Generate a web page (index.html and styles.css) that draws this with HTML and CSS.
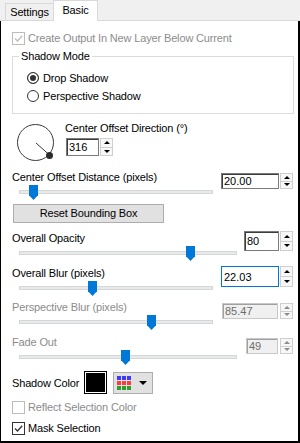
FILE: index.html
```html
<!DOCTYPE html>
<html lang="en">
<head>
<meta charset="UTF-8" />
<meta name="viewport" content="width=device-width, initial-scale=1" />
<title>Drop Shadow</title>
<link rel="stylesheet" href="styles.css">
</head>
<body>
  <div class="tabs">
    <div class="tab">Settings</div>
    <div class="tab active">Basic</div>
  </div>

  <div class="page">
    <div class="check disabled">
      <span class="box"><svg viewBox="0 0 11 11"><path d="M2 5.5 L4.5 8 L9.2 2.8" /></svg></span>
      Create Output In New Layer Below Current
    </div>

    <div class="group">
      <span class="legend">Shadow Mode</span>
      <div class="radio first"><span class="dot on"></span>Drop Shadow</div>
      <div class="radio"><span class="dot"></span>Perspective Shadow</div>
    </div>

    <div class="direction">
      <svg class="dial" width="40" height="40" viewBox="0 0 40 40">
        <circle cx="20.5" cy="20.5" r="18" fill="none" stroke="#3a3a3a" />
        <line x1="21" y1="21" x2="34.5" y2="33" stroke="#3a3a3a" />
        <circle cx="34.5" cy="33.5" r="3.5" fill="#2b2b2b" />
      </svg>
      <div class="dir-fields">
        <div class="label">Center Offset Direction (°)</div>
        <div class="spin dir">
          <span class="num" style="width:33px">316</span>
          <span class="arrows"><i class="up"></i><i class="down"></i></span>
        </div>
      </div>
    </div>

    <div class="row gap-lg">
      <div class="slider-col">
        <div class="label">Center Offset Distance (pixels)</div>
        <div class="slider"><div class="track"></div><span class="thumb" style="left:10px"></span></div>
      </div>
      <div class="spin">
        <span class="num" style="width:58px">20.00</span>
        <span class="arrows"><i class="up"></i><i class="down"></i></span>
      </div>
    </div>

    <div class="btn">Reset Bounding Box</div>

    <div class="row gap-lg">
      <div class="slider-col">
        <div class="label">Overall Opacity</div>
        <div class="slider long"><div class="track"></div><span class="thumb" style="left:167px"></span></div>
      </div>
      <div class="spin tall">
        <span class="num" style="width:35px">80</span>
        <span class="arrows"><i class="up"></i><i class="down"></i></span>
      </div>
    </div>

    <div class="row">
      <div class="slider-col">
        <div class="label">Overall Blur (pixels)</div>
        <div class="slider"><div class="track"></div><span class="thumb" style="left:69px"></span></div>
      </div>
      <div class="spin tall focus">
        <span class="num" style="width:58px">22.03</span>
        <span class="arrows"><i class="up"></i><i class="down"></i></span>
      </div>
    </div>

    <div class="row gap-sm disabled">
      <div class="slider-col">
        <div class="label">Perspective Blur (pixels)</div>
        <div class="slider"><div class="track"></div><span class="thumb" style="left:128px"></span></div>
      </div>
      <div class="spin off">
        <span class="num" style="width:56px">85.47</span>
        <span class="arrows"><i class="up"></i><i class="down"></i></span>
      </div>
    </div>

    <div class="row disabled">
      <div class="slider-col">
        <div class="label">Fade Out</div>
        <div class="slider long"><div class="track"></div><span class="thumb" style="left:102px"></span></div>
      </div>
      <div class="spin off">
        <span class="num" style="width:32px">49</span>
        <span class="arrows"><i class="up"></i><i class="down"></i></span>
      </div>
    </div>

    <div class="color-row">
      <span class="color-label">Shadow Color</span>
      <span class="swatch"></span>
      <span class="palette">
        <span class="grid">
          <i class="b"></i><i class="b"></i><i class="b"></i>
          <i class="r"></i><i class="r"></i><i class="r"></i>
          <i class="g"></i><i class="g"></i><i class="g"></i>
        </span>
        <span class="caret"></span>
      </span>
    </div>

    <div class="check disabled reflect">
      <span class="box"></span>
      Reflect Selection Color
    </div>

    <div class="check mask">
      <span class="box"><svg viewBox="0 0 11 11"><path d="M2 5.5 L4.5 8 L9.2 2.8" /></svg></span>
      Mask Selection
    </div>
  </div>
</body>
</html>
```

FILE: styles.css
```css
* {
  box-sizing: border-box;
}

html, body {
  margin: 0;
  padding: 0;
}

body {
  width: 300px;
  height: 443px;
  overflow: hidden;
  background: #fff;
  color: #000;
  font-family: "Liberation Sans", Arial, sans-serif;
  font-size: 11px;
  letter-spacing: -0.15px;
}

/* tab strip */
.tabs {
  display: flex;
  align-items: flex-end;
  height: 21px;
  padding-left: 5px;
  background: #f0f0f0;
  border-bottom: 1px solid #d9d9d9;
}

.tab {
  width: 49px;
  height: 17px;
  line-height: 16px;
  text-align: center;
  border: 1px solid #d9d9d9;
  border-bottom: none;
  background: #f0f0f0;
}

.tab.active {
  width: 45px;
  height: 21px;
  line-height: 19px;
  margin-left: -1px;
  margin-bottom: -1px;
  background: #fff;
}

/* tab page */
.page {
  height: 422px;
  padding: 11px 4px 0 11px;
  border-left: 1px solid #000;
  border-right: 2px solid #000;
  border-bottom: 2px solid #000;
}

.label {
  line-height: 13px;
  white-space: nowrap;
}

.disabled,
.disabled .label {
  color: #8c8c8c;
}

/* check boxes */
.check {
  display: flex;
  align-items: center;
  gap: 3px;
  height: 13px;
  line-height: 13px;
  white-space: nowrap;
}

.box {
  width: 13px;
  height: 13px;
  border: 1px solid #333;
  background: #fff;
  flex: none;
}

.box svg {
  display: block;
  width: 11px;
  height: 11px;
  fill: none;
  stroke: #333;
  stroke-width: 1.3;
}

.check.disabled .box {
  border-color: #bcbcbc;
}

.check.disabled .box svg {
  stroke: #bcbcbc;
}

.check.reflect {
  margin-top: 7px;
}

.check.mask {
  margin-top: 8px;
}

/* group box */
.group {
  margin-top: 11px;
  height: 58px;
  border: 1px solid #dcdcdc;
}

.legend {
  display: block;
  width: fit-content;
  margin: -7px 0 0 6px;
  padding: 0 2px;
  line-height: 13px;
  background: #fff;
}

.radio {
  display: flex;
  align-items: center;
  gap: 4px;
  height: 13px;
  margin: 5px 0 0 14px;
}

.radio.first {
  margin-top: 8px;
}

.dot {
  width: 12px;
  height: 12px;
  border: 1px solid #333;
  border-radius: 50%;
  background: #fff;
}

.dot.on {
  background: #333;
  box-shadow: inset 0 0 0 2px #fff;
}

/* direction dial */
.direction {
  display: flex;
  margin-top: 8px;
}

.dial {
  display: block;
  margin-left: 3px;
}

.dir-fields {
  margin-left: 10px;
}

/* number inputs with up/down buttons */
.spin {
  display: flex;
  gap: 1px;
  height: 16px;
  margin-top: 2px;
  margin-right: 1px;
}

.spin.dir {
  height: 18px;
  margin: 3px 0 0 1px;
}

.spin.tall {
  height: 20px;
  margin-top: -1px;
}

.spin.focus {
  height: 21px;
}

.spin.off {
  gap: 2px;
}

.num {
  display: flex;
  align-items: center;
  padding-left: 2px;
  letter-spacing: 0;
  background: #fff;
  border: 1px solid #7a7a7a;
  box-shadow: inset 1px 1px 0 #3c3c3c;
}

.focus .num {
  border-color: #0078d7;
  box-shadow: none;
}

.off .num {
  color: #6d6d6d;
  background: #f0f0f0;
  border-color: #c8c8c8;
  box-shadow: inset 1px 1px 0 #a0a0a0;
}

.arrows {
  display: flex;
  flex-direction: column;
  width: 13px;
  border: 1px solid #cfcfcf;
  background: #f7f7f7;
}

.arrows i {
  flex: 1;
  display: flex;
  align-items: center;
  justify-content: center;
}

.arrows i + i {
  border-top: 1px solid #cfcfcf;
}

.arrows i::after {
  content: "";
  border-left: 3px solid transparent;
  border-right: 3px solid transparent;
}

.arrows .up::after {
  border-bottom: 3px solid #000;
}

.arrows .down::after {
  border-top: 3px solid #000;
}

.off .arrows .up::after {
  border-bottom-color: #8c8c8c;
}

.off .arrows .down::after {
  border-top-color: #8c8c8c;
}

/* slider rows */
.row {
  display: flex;
  justify-content: space-between;
  align-items: flex-start;
  margin-top: 6px;
}

.row.gap-lg {
  margin-top: 9px;
}

.row.gap-sm {
  margin-top: 5px;
}

.slider {
  position: relative;
  width: 194px;
  height: 16px;
  margin-left: 7px;
}

.slider.long {
  width: 218px;
}

.track {
  position: relative;
  top: 6px;
  height: 4px;
  background: #e7eaea;
  border: 1px solid #d6d6d6;
}

.thumb {
  position: absolute;
  top: 1px;
  width: 9px;
  height: 15px;
  background: #0078d7;
  clip-path: polygon(0 0, 100% 0, 100% 68%, 50% 100%, 0 68%);
}

.btn {
  width: 151px;
  height: 19px;
  margin: 4px 0 0 1px;
  line-height: 17px;
  text-align: center;
  background: #e1e1e1;
  border: 1px solid #adadad;
}

/* shadow colour */
.color-row {
  display: flex;
  align-items: center;
  height: 23px;
  margin-top: 6px;
}

.color-label {
  width: 72px;
  white-space: nowrap;
}

.swatch {
  width: 23px;
  height: 23px;
  background: #000;
  border: 1px solid #000;
  box-shadow: inset 0 0 0 1px #fff;
}

.palette {
  display: flex;
  align-items: center;
  width: 40px;
  height: 22px;
  margin-left: 6px;
  padding-left: 3px;
  background: #e1e1e1;
  border: 1px solid #adadad;
}

.grid {
  display: grid;
  grid-template-columns: repeat(3, 4px);
  grid-auto-rows: 4px;
  gap: 1px;
}

.grid i.b { background: #3b3bff; }
.grid i.r { background: #ff3b3b; }
.grid i.g { background: #2e9e2e; }

.caret {
  margin-left: 8px;
  border-left: 4px solid transparent;
  border-right: 4px solid transparent;
  border-top: 4px solid #000;
}
```
